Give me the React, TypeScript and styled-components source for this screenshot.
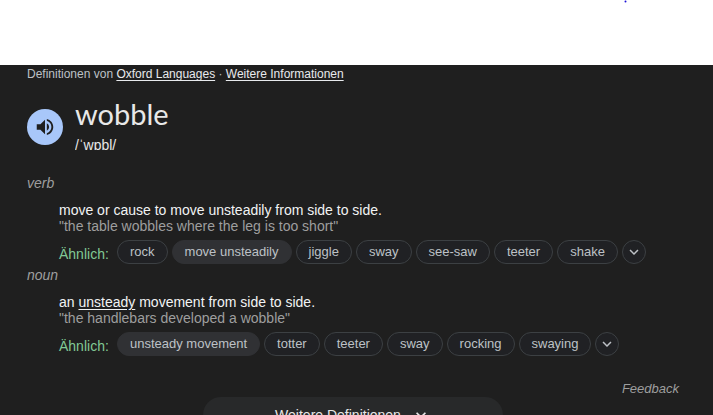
import React from 'react';
import styled, { createGlobalStyle } from 'styled-components';

const GlobalStyle = createGlobalStyle`
  * { box-sizing: border-box; }
  html, body, #root { height: 100%; }
  body {
    margin: 0;
    overflow: hidden;
    background: #ffffff;
    font-family: "Liberation Sans", Arial, sans-serif;
  }
  button { font-family: inherit; cursor: pointer; }
`;

const Page = styled.div`
  display: flex;
  flex-direction: column;
  height: 100%;
`;

const TopStrip = styled.header`
  display: flex;
  justify-content: flex-end;
  flex: none;
  height: 65px;
  padding-right: 86px;
`;

const Speck = styled.svg`
  display: block;
  width: 3px;
  height: 3px;
`;

const Panel = styled.main`
  display: flex;
  flex-direction: column;
  flex: 1;
  min-height: 0;
  overflow: hidden;
  padding: 0 34px 0 27px;
  background: #1f1f1f;
  color: #e8e8e8;
`;

const Source = styled.div`
  flex: none;
  height: 18px;
  font-size: 12px;
  line-height: 18px;
  color: #bdc1c6;
`;

const SourceLink = styled.a`
  color: #e8eaed;
  text-decoration: underline;
  text-underline-offset: 2px;
`;

const Heading = styled.div`
  display: flex;
  flex: none;
  gap: 12px;
  margin-top: 15px;
`;

const Speaker = styled.button`
  display: grid;
  place-items: center;
  flex: none;
  width: 36px;
  height: 36px;
  margin-top: 11px;
  padding: 0;
  border: 0;
  border-radius: 50%;
  background: #a8c7fa;
  color: #1f1f1f;
`;

const Word = styled.h1`
  margin: 0 0 4px;
  font-family: Lato, sans-serif;
  font-size: 29px;
  font-weight: 400;
  line-height: 32px;
  color: #e8e8e8;
`;

const Phonetic = styled.div`
  height: 16px;
  overflow: hidden;
  font-size: 14px;
  line-height: 22px;
`;

const Senses = styled.div`
  display: flex;
  flex: none;
  flex-direction: column;
  gap: 3px;
  margin-top: 25px;
`;

const Entry = styled.section`
  padding-left: 32px;
`;

const PartOfSpeech = styled.h2`
  margin: 0 0 11px -32px;
  font-size: 14px;
  font-style: italic;
  font-weight: 400;
  line-height: 16px;
  color: #9e9e9e;
`;

const Definition = styled.p`
  margin: 0;
  font-size: 14px;
  line-height: 16px;
  color: #f1f3f4;
`;

const Example = styled(Definition)`
  color: #9e9e9e;
`;

const TermLink = styled.a`
  color: inherit;
  text-decoration: underline;
  text-underline-offset: 2px;
`;

const Similar = styled.div`
  display: flex;
  gap: 8px;
  margin-top: 6px;
`;

const SimilarLabel = styled.span`
  flex: none;
  width: 50px;
  padding-top: 6px;
  font-size: 14px;
  line-height: 16px;
  color: #81c995;
`;

const Chips = styled.div`
  display: flex;
  flex-wrap: wrap;
  gap: 4px;
`;

const Chip = styled.button<{ $filled?: boolean }>`
  height: 24px;
  padding: 0 12px;
  border: 1px solid ${(p) => (p.$filled ? '#303134' : '#3c4043')};
  border-radius: 12px;
  background: ${(p) => (p.$filled ? '#303134' : '#202124')};
  color: #bdc1c6;
  font-size: 13px;
  line-height: 22px;
  white-space: nowrap;
`;

const MoreChip = styled(Chip)`
  display: grid;
  place-items: center;
  width: 24px;
  padding: 0;
`;

const Feedback = styled.a`
  align-self: flex-end;
  flex: none;
  margin-top: 25px;
  font-size: 13px;
  font-style: italic;
  line-height: 16px;
  color: #9e9e9e;
  text-decoration: none;
`;

const MoreButton = styled.button`
  display: flex;
  flex: none;
  align-self: center;
  align-items: center;
  justify-content: center;
  gap: 10px;
  width: 100%;
  max-width: 300px;
  height: 36px;
  padding: 0;
  border: 0;
  border-radius: 18px;
  background: #28292a;
  color: #e8e8e8;
  font-size: 14px;
`;

const Chevron = ({ size }: { size: number }) => (
  <svg width={size} height={size} viewBox="0 0 24 24" fill="currentColor" aria-hidden="true">
    <path d="M7.41 8.59 12 13.17l4.59-4.58L18 10l-6 6-6-6z" />
  </svg>
);

type Sense = {
  part: string;
  definition: React.ReactNode;
  example: string;
  similar: string[];
  filled: string;
};

const senses: Sense[] = [
  {
    part: 'verb',
    definition: 'move or cause to move unsteadily from side to side.',
    example: '"the table wobbles where the leg is too short"',
    similar: ['rock', 'move unsteadily', 'jiggle', 'sway', 'see-saw', 'teeter', 'shake'],
    filled: 'move unsteadily',
  },
  {
    part: 'noun',
    definition: (
      <>
        an <TermLink href="#unsteady">unsteady</TermLink> movement from side to side.
      </>
    ),
    example: '"the handlebars developed a wobble"',
    similar: ['unsteady movement', 'totter', 'teeter', 'sway', 'rocking', 'swaying'],
    filled: 'unsteady movement',
  },
];

export default function App() {
  return (
    <>
      <GlobalStyle />
      <Page>
        <TopStrip>
          <Speck viewBox="0 0 3 3" aria-hidden="true">
            <circle cx="1.5" cy="1.5" r="1" fill="#1a10d8" />
          </Speck>
        </TopStrip>
        <Panel>
          <Source>
            Definitionen von <SourceLink href="#oxford">Oxford Languages</SourceLink> ·{' '}
            <SourceLink href="#info">Weitere Informationen</SourceLink>
          </Source>
          <Heading>
            <Speaker aria-label="wobble">
              <svg width="22" height="22" viewBox="0 0 24 24" fill="currentColor" aria-hidden="true">
                <path d="M3 9v6h4l5 5V4L7 9H3zm13.5 3A4.5 4.5 0 0 0 14 7.97v8.05A4.47 4.47 0 0 0 16.5 12zM14 3.23v2.06c2.89.86 5 3.54 5 6.71s-2.11 5.85-5 6.71v2.06c4.01-.91 7-4.49 7-8.77s-2.99-7.86-7-8.77z" />
              </svg>
            </Speaker>
            <div>
              <Word>wobble</Word>
              <Phonetic>/ˈwɒbl/</Phonetic>
            </div>
          </Heading>
          <Senses>
            {senses.map((sense) => (
              <Entry key={sense.part}>
                <PartOfSpeech>{sense.part}</PartOfSpeech>
                <Definition>{sense.definition}</Definition>
                <Example>{sense.example}</Example>
                <Similar>
                  <SimilarLabel>Ähnlich:</SimilarLabel>
                  <Chips>
                    {sense.similar.map((word) => (
                      <Chip key={word} $filled={word === sense.filled}>
                        {word}
                      </Chip>
                    ))}
                    <MoreChip aria-label="Mehr anzeigen">
                      <Chevron size={18} />
                    </MoreChip>
                  </Chips>
                </Similar>
              </Entry>
            ))}
          </Senses>
          <Feedback href="#feedback">Feedback</Feedback>
          <MoreButton>
            Weitere Definitionen
            <Chevron size={20} />
          </MoreButton>
        </Panel>
      </Page>
    </>
  );
}
